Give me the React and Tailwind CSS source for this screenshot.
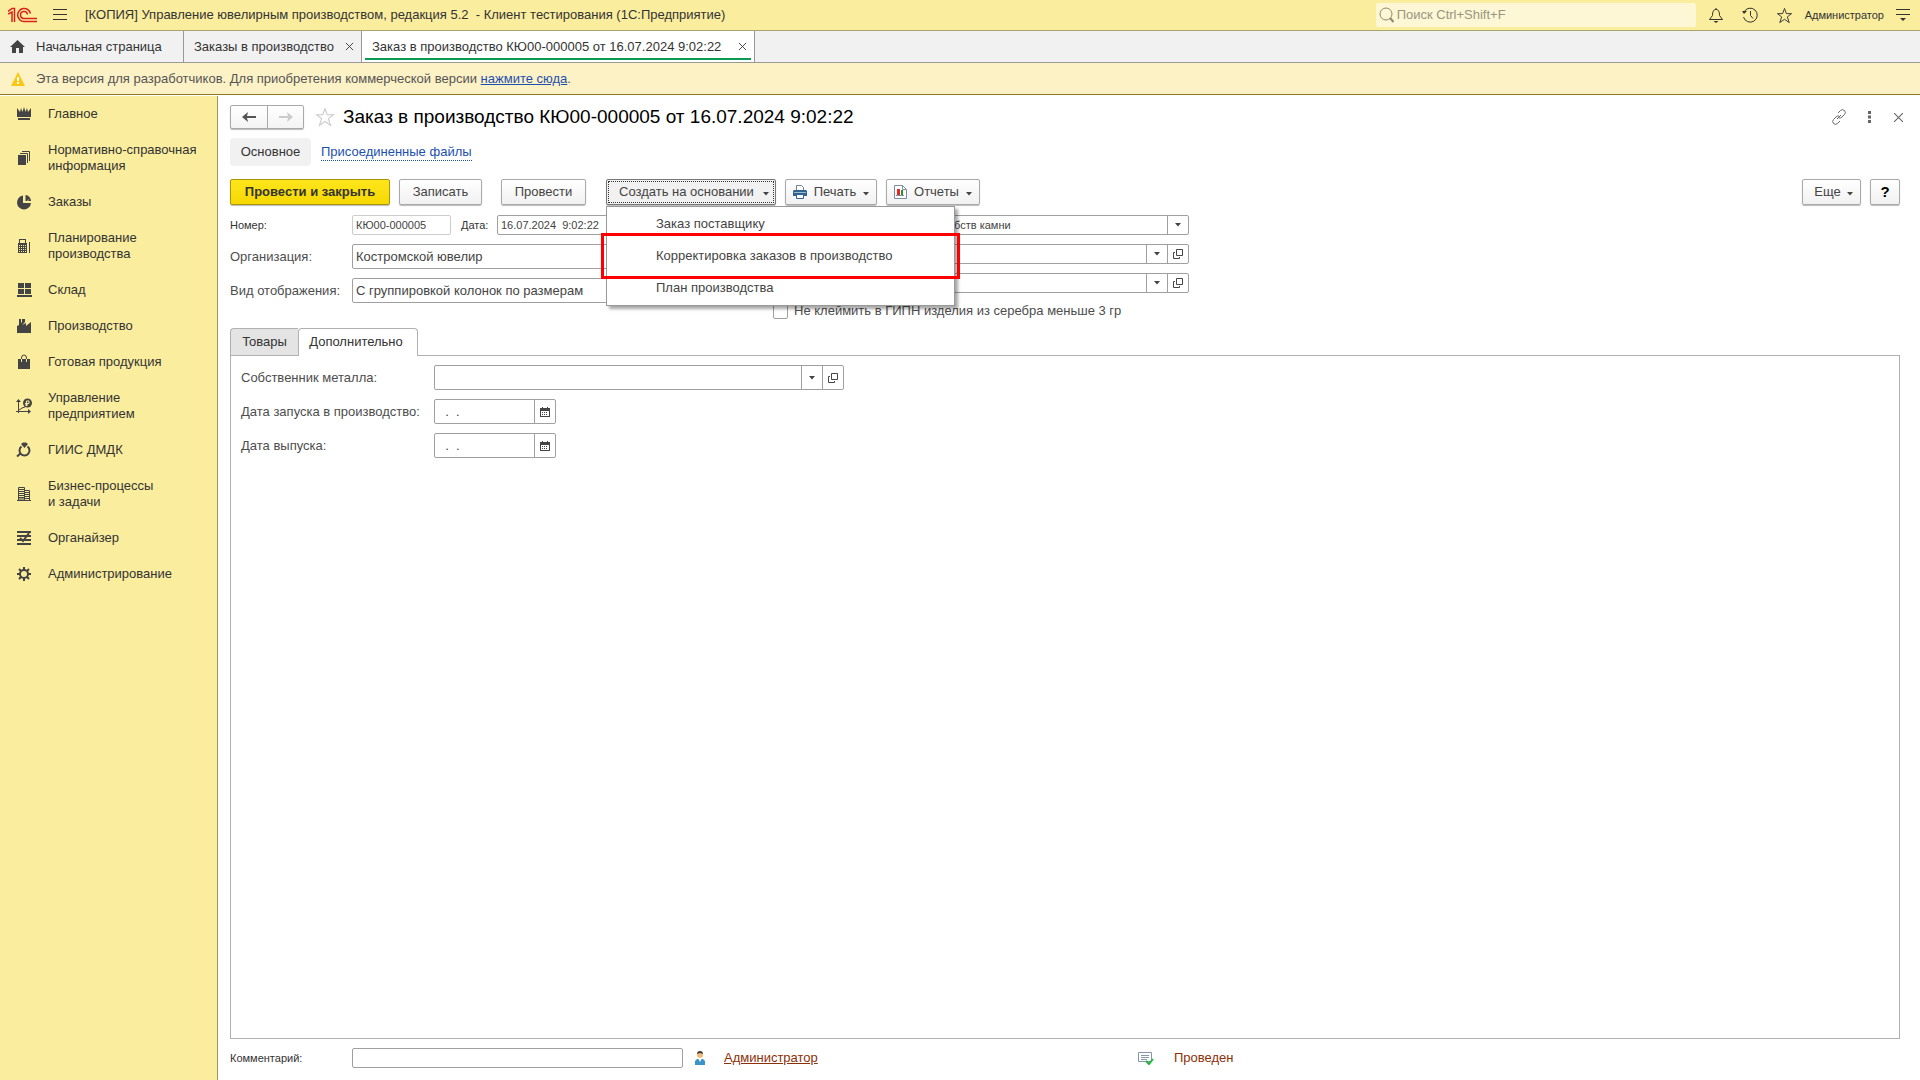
const SECTIONS = [
  { icon: "crown", lines: ["Главное"] },
  { icon: "books", lines: ["Нормативно-справочная", "информация"] },
  { icon: "pie", lines: ["Заказы"] },
  { icon: "calc", lines: ["Планирование", "производства"] },
  { icon: "store", lines: ["Склад"] },
  { icon: "factory", lines: ["Производство"] },
  { icon: "bag", lines: ["Готовая продукция"] },
  { icon: "chart", lines: ["Управление", "предприятием"] },
  { icon: "ring", lines: ["ГИИС ДМДК"] },
  { icon: "building", lines: ["Бизнес-процессы", "и задачи"] },
  { icon: "checklist", lines: ["Органайзер"] },
  { icon: "gear", lines: ["Администрирование"] },
];

const SECTION_ICONS = {
  crown: <path d="M1 2l3 4 1-4 1.500 4L8 1l1.500 5L11 2l1 4 3-4v9H1zM2 12h12v2H2z" />,
  books: (
    <>
      <path d="M2 5h8v10H2z" />
      <path d="M4 3.500h7.500V13M6 1.500h7.500V11" fill="none" stroke="currentColor" />
    </>
  ),
  pie: <path d="M7 1.500V9h8A7 7 0 1 1 7 1.500zM9.500 1A6 6 0 0 1 15 7h-3l1.500-2.500L11 7H9.500z" />,
  calc: (
    <>
      <path d="M3 1h7v4h1v10H2V5h1zM4 2v3h5V2z" fillRule="evenodd" />
      <path d="M13 4h1v11h-1z" />
      <path d="M3 7.500h7M3 9.500h7M3 11.500h7M3 13.500h7" stroke="#fbed9e" strokeDasharray="1 1" />
    </>
  ),
  store: <path d="M2 1h6v5H2zM9 1h6v5H9zM2 7h6v5H2zM9 7h6v5H9zM1 13h15v2H1z" />,
  factory: <path d="M1 15V8l2-1V1h2v4l1-1V1h3v3L6 7l4-2v3l5-4v11z" />,
  bag: (
    <>
      <path d="M2 5h12v10H2z" />
      <path d="M5.500 8V4a2.500 3 0 0 1 5 0v4" fill="none" stroke="currentColor" />
      <path d="M5.500 5v3M10.500 5v3" stroke="#fbed9e" />
    </>
  ),
  chart: (
    <>
      <path d="M0 4l2.500-3L5 4zM12 11l3 2.500-3 2.500z" />
      <path d="M2.500 3v12M0 13.500h13M3 12l3-2 3-1" fill="none" stroke="currentColor" />
      <circle cx="11.500" cy="5" r="4.500" />
      <path d="M10.500 8V3h2.500v2.500h-4M9 7h3" fill="none" stroke="#fbed9e" />
    </>
  ),
  ring: (
    <>
      <path d="M5 2l2-1.500h3L12 2l-3.500 4z" />
      <path d="M5.500 4.500A5 5 0 1 0 11.500 4.500M5 11l-4 3.500" fill="none" stroke="currentColor" strokeWidth="2" />
    </>
  ),
  building: (
    <>
      <path d="M2.500 14V1.500h6V14M8.500 4.500h5V14M1 14.500h14" fill="none" stroke="currentColor" />
      <path d="M3 3.500h5M3 5.500h5M3 7.500h5M3 9.500h5M3 11.500h5M3 13h5M9 6.500h4M9 8.500h4M9 10.500h4M9 12.500h4" stroke="currentColor" />
    </>
  ),
  checklist: (
    <path d="M1 2h14M1 6h14M1 10h14M1 14h14M4 8l3 3 6-8" fill="none" stroke="currentColor" strokeWidth="2" />
  ),
  gear: (
    <>
      <circle cx="8" cy="8" r="4" fill="none" stroke="currentColor" strokeWidth="2" />
      <path
        d="M8 1v3M8 12v3M1 8h3M12 8h3M3 3l2 2M11 11l2 2M13 3l-2 2M3 13l2-2"
        stroke="currentColor"
        strokeWidth="2"
      />
    </>
  ),
};

const MENU_ITEMS = ["Заказ поставщику", "Корректировка заказов в производство", "План производства"];

function Logo() {
  return (
    <svg width="30" height="16" viewBox="0 0 30 16" fill="none" stroke="#d9221c" className="shrink-0" aria-label="1С">
      <path d="M0 4.500L4 1.500h2.500V15M4 15V5L0 7" strokeWidth="1.500" />
      <path d="M22.500 6.500A6.500 6.500 0 1 0 16 14.500h13" strokeWidth="1.500" />
      <path d="M19.500 7.500A3.500 3.500 0 1 0 16 11.500h13" strokeWidth="1.500" />
    </svg>
  );
}

function Star({ size, className }) {
  return (
    <svg width={size} height={size} viewBox="0 0 18 18" fill="none" stroke="currentColor" className={className}>
      <path d="M9 1.500l2 5.500h5.500l-4.500 3.500 2 6-5-3.500-5 3.500 2-6L1.500 7H7z" />
    </svg>
  );
}

function Caret({ className = "" }) {
  return (
    <svg width="6" height="4" viewBox="0 0 6 4" fill="currentColor" className={`shrink-0 ${className}`}>
      <path d="M0 0h6L3 3.500z" />
    </svg>
  );
}

function CloseIcon({ size }) {
  return (
    <svg width={size} height={size} viewBox="0 0 10 10" fill="none" stroke="currentColor">
      <path d="M1 1l8 8M9 1L1 9" />
    </svg>
  );
}

function OpenIcon() {
  return (
    <svg width="10" height="10" viewBox="0 0 10 10" fill="none" stroke="currentColor">
      <path d="M3.500 0.500h6v6h-6zM2 3.500H0.500v6h6V8" />
    </svg>
  );
}

function CalendarIcon() {
  return (
    <svg width="10" height="10" viewBox="0 0 10 10">
      <path d="M0 1h2V0h1v1h4V0h1v1h2v9H0zM1 4v5h8V4z" fill="#444" fillRule="evenodd" />
      <path d="M2 5.500h6M2 7.500h6" stroke="#444" strokeDasharray="1 1" />
    </svg>
  );
}

function BackArrow() {
  return (
    <svg width="14" height="10" viewBox="0 0 14 10" fill="currentColor">
      <path d="M0 5l6-5-1 4h9v2H5l1 4z" />
    </svg>
  );
}

function PrintIcon() {
  return (
    <svg width="14" height="14" viewBox="0 0 14 14">
      <path d="M3.500 6V0.500h5l2 2V6" fill="#fff" stroke="#6f8192" />
      <path d="M1 5h12l1 1v5H0V6z" fill="#2f628f" />
      <path d="M1 7.500h12" stroke="#9dbad3" />
      <path d="M3.500 9.500h7v4h-7z" fill="#fff" stroke="#2f628f" />
    </svg>
  );
}

function ReportIcon() {
  return (
    <svg width="13" height="14" viewBox="0 0 13 14">
      <path d="M0.500 0.500h8l4 4v9h-12z" fill="#fff" stroke="#7c8da0" />
      <path d="M8.500 0.500v4h4" fill="none" stroke="#7c8da0" />
      <path d="M3 4h3v6H3z" fill="#e22" />
      <path d="M7 5h2v5H7z" fill="#1a9a2a" />
      <path d="M2 10.500h8" stroke="#7c8da0" />
    </svg>
  );
}

const BUTTON_LOOK = {
  plain: "border-[#a9a9a9] bg-linear-to-b from-white to-[#f1f1f1] text-[#444]",
  primary: "border-[#a8950c] bg-linear-to-b from-[#ffe51a] to-[#f5d800] font-bold text-[#333]",
  pressed: "border-[#777] bg-[#f1f1f1] p-px text-[#444]",
  help: "border-[#a9a9a9] bg-linear-to-b from-white to-[#f1f1f1] text-[15px] font-bold text-black",
};

function Button({ look = "plain", className = "", children, ...rest }) {
  return (
    <button
      type="button"
      className={`flex h-[26px] items-center justify-center rounded-xs border whitespace-nowrap shadow-[0_1px_1px_#bbb] ${BUTTON_LOOK[look]} ${className}`}
      {...rest}
    >
      {children}
    </button>
  );
}

// Text box with small buttons joined to its right edge.
function Field({ id, value = "", buttons = [], small, pale, className = "", label }) {
  return (
    <div
      className={`flex overflow-hidden rounded-xs border bg-white ${pale ? "border-[#ccc]" : "border-[#a0a0a0]"} ${small ? "h-5 text-[11px]" : "h-[25px]"} ${className}`}
    >
      <input id={id} defaultValue={value} aria-label={label} className="min-w-0 flex-1 px-[3px] text-[#444] outline-none" />
      {buttons.map((kind) => (
        <button
          key={kind}
          type="button"
          aria-label={kind}
          className="flex w-[21px] shrink-0 items-center justify-center border-l border-[#a0a0a0] text-[#444]"
        >
          {kind === "list" && <Caret />}
          {kind === "open" && <OpenIcon />}
          {kind === "calendar" && <CalendarIcon />}
        </button>
      ))}
    </div>
  );
}

function TopBar() {
  return (
    <header className="flex h-[31px] shrink-0 items-center border-b border-[#a9a36c] bg-[#fbed9e] pl-2 text-[#333]">
      <Logo />
      <button type="button" aria-label="Меню" className="ml-[15px]">
        <svg width="14" height="12" viewBox="0 0 14 12" stroke="currentColor">
          <path d="M0 0.500h14M0 5.500h14M0 10.500h14" />
        </svg>
      </button>
      <h1 className="ml-[18px] whitespace-pre">
        {"[КОПИЯ] Управление ювелирным производством, редакция 5.2  - Клиент тестирования (1С:Предприятие)"}
      </h1>
      <div className="ml-auto flex h-6 w-80 items-center rounded-xs bg-[#fdf7d6] pl-[3px]">
        <svg width="16" height="16" viewBox="0 0 16 16" fill="none" stroke="#8f8a70" className="shrink-0">
          <circle cx="7" cy="7" r="6" />
          <path d="M11 11l3.500 4" strokeWidth="2" />
        </svg>
        <input
          aria-label="Поиск"
          placeholder="Поиск Ctrl+Shift+F"
          className="min-w-0 flex-1 pl-[2px] outline-none placeholder:text-[#9a957d]"
        />
      </div>
      <button type="button" aria-label="Уведомления" className="ml-3">
        <svg width="16" height="16" viewBox="0 0 16 16" fill="none" stroke="currentColor">
          <path d="M1.500 12.500h13l-3-4c0-4-1-6-3.500-6s-3.500 2-3.500 6zM8 2.500V1" />
          <path d="M5.500 14h5L8 16z" fill="currentColor" stroke="none" />
        </svg>
      </button>
      <button type="button" aria-label="История" className="ml-[18px]">
        <svg width="16" height="16" viewBox="0 0 16 16" fill="none" stroke="currentColor">
          <path d="M2 5a7 7 0 1 1-0.500 5M8.500 4v4.500l2.500 3" />
          <path d="M0 4h5L2 7z" fill="currentColor" stroke="none" />
        </svg>
      </button>
      <button type="button" aria-label="Избранное" className="ml-[18px]">
        <Star size={17} />
      </button>
      <button type="button" className="ml-3 text-[11px]">
        Администратор
      </button>
      <button type="button" aria-label="Настройки" className="mr-[10px] ml-3">
        <svg width="14" height="12" viewBox="0 0 14 12" stroke="currentColor">
          <path d="M0 0.500h14M0 5.500h14" />
          <path d="M4 9h6l-3 3z" fill="currentColor" stroke="none" />
        </svg>
      </button>
    </header>
  );
}

function WindowTabs() {
  return (
    <nav className="flex h-8 shrink-0 border-b border-[#999] bg-[#f1f1f1] text-[#333]">
      <button type="button" className="flex w-[184px] items-center border-r border-[#999] pl-[10px]">
        <svg width="15" height="13" viewBox="0 0 15 13" fill="#444">
          <path d="M7.500 0L15 7h-2v6H9V8H6v5H2V7H0z" />
        </svg>
        <span className="ml-[11px]">Начальная страница</span>
      </button>
      <div className="flex w-[178px] items-center justify-between border-r border-[#999] pr-[7px] pl-[10px]">
        <button type="button">Заказы в производство</button>
        <button type="button" aria-label="Закрыть">
          <CloseIcon size={9} />
        </button>
      </div>
      <div className="flex w-[393px] border-r border-[#999] bg-white px-[3px] pb-[2px]">
        <div className="flex flex-1 items-center justify-between border-b-2 border-[#0a9a55] pt-1 pr-1 pl-[7px]">
          <button type="button">Заказ в производство КЮ00-000005 от 16.07.2024 9:02:22</button>
          <button type="button" aria-label="Закрыть">
            <CloseIcon size={9} />
          </button>
        </div>
      </div>
    </nav>
  );
}

function Notice() {
  return (
    <div className="flex h-8 shrink-0 items-center border-b border-[#94781c] bg-[#fdf1c6] pl-[11px] text-[#555]">
      <svg width="14" height="14" viewBox="0 0 14 14">
        <path d="M7 0l7 14H0z" fill="#fbc712" />
        <path d="M6 5h2v4H6zM6 10h2v2H6z" fill="#fff" />
      </svg>
      <p className="ml-[11px]">
        Эта версия для разработчиков. Для приобретения коммерческой версии{" "}
        <a href="#buy" className="text-[#1d50ae] underline">
          нажмите сюда
        </a>
        .
      </p>
    </div>
  );
}

function Sidebar() {
  return (
    <nav className="mt-px w-[218px] shrink-0 border-r border-[#9c955c] bg-[#fbed9e] text-[#333]">
      {SECTIONS.map((section) => (
        <a key={section.icon} href={`#${section.icon}`} className="flex items-center py-[10px] pl-4 leading-4">
          <svg width="16" height="16" viewBox="0 0 16 16" fill="currentColor" className="shrink-0 text-[#444]">
            {SECTION_ICONS[section.icon]}
          </svg>
          <span className="ml-4">
            {section.lines.map((line) => (
              <span key={line} className="block whitespace-nowrap">
                {line}
              </span>
            ))}
          </span>
        </a>
      ))}
    </nav>
  );
}

function TitleRow() {
  return (
    <div className="flex h-6 items-center">
      <div className="flex h-6 rounded-xs border border-[#a9a9a9] bg-linear-to-b from-white to-[#f4f4f4] shadow-[0_1px_1px_#bbb]">
        <button type="button" aria-label="Назад" className="flex w-9 items-center justify-center text-[#555]">
          <BackArrow />
        </button>
        <button
          type="button"
          aria-label="Вперед"
          className="flex w-9 items-center justify-center border-l border-[#a9a9a9] text-[#ccc]"
        >
          <span className="rotate-180">
            <BackArrow />
          </span>
        </button>
      </div>
      <button type="button" aria-label="В избранное" className="ml-[11px] text-[#ccc]">
        <Star size={20} />
      </button>
      <h2 className="ml-2 text-[19px] whitespace-nowrap text-black">
        Заказ в производство КЮ00-000005 от 16.07.2024 9:02:22
      </h2>
      <div className="ml-auto flex items-center text-[#666]">
        <button type="button" aria-label="Ссылка">
          <svg width="16" height="16" viewBox="0 0 16 16" fill="none" stroke="currentColor">
            <path d="M7 4l2.500-2.500a3 3 0 0 1 4 0 3 3 0 0 1 0 4L11 8a3 3 0 0 1-3 1M9 12l-2.500 2.500a3 3 0 0 1-4 0 3 3 0 0 1 0-4L5 8a3 3 0 0 1 3-1M6 10l4-4" />
          </svg>
        </button>
        <button type="button" aria-label="Еще действия" className="ml-[21px]">
          <svg width="3" height="12" viewBox="0 0 3 12" fill="currentColor">
            <path d="M0 0h3v3H0zM0 4.500h3v3H0zM0 9h3v3H0z" />
          </svg>
        </button>
        <button type="button" aria-label="Закрыть форму" className="-mr-1 ml-[22px]">
          <CloseIcon size={11} />
        </button>
      </div>
    </div>
  );
}

function CreateMenu() {
  return (
    <div className="relative ml-5">
      <Button look="pressed" className="w-[170px]" aria-expanded="true">
        <span className="flex h-full flex-1 items-center justify-between border border-dotted border-[#333] pr-1 pl-[10px]">
          Создать на основании
          <Caret className="mt-1" />
        </span>
      </Button>
      <div
        role="menu"
        className="absolute top-[27px] left-0 z-10 flex w-[349px] flex-col border border-[#999] bg-white py-px shadow-[3px_3px_3px_rgba(0,0,0,0.35)]"
      >
        {MENU_ITEMS.map((item) => (
          <button key={item} type="button" role="menuitem" className="h-8 pl-[49px] text-left text-[#444]">
            {item}
          </button>
        ))}
        <div className="pointer-events-none absolute top-[26px] -left-[6px] h-[46px] w-[359px] border-3 border-[#fe0000]" />
      </div>
    </div>
  );
}

function Toolbar() {
  return (
    <div className="mt-[13px] flex items-center">
      <Button look="primary" className="w-40">
        Провести и закрыть
      </Button>
      <Button className="ml-[9px] w-[83px]">Записать</Button>
      <Button className="ml-[19px] w-[85px]">Провести</Button>
      <CreateMenu />
      <Button className="ml-[9px] w-[92px]">
        <PrintIcon />
        <span className="ml-[7px]">Печать</span>
        <Caret className="mt-1 ml-[7px]" />
      </Button>
      <Button className="ml-[9px] w-[94px]">
        <ReportIcon />
        <span className="ml-[7px]">Отчеты</span>
        <Caret className="mt-1 ml-[7px]" />
      </Button>
      <Button className="ml-auto w-[59px] pl-1">
        Еще
        <Caret className="mt-1 ml-[6px]" />
      </Button>
      <Button look="help" className="ml-[9px] w-[30px]">
        ?
      </Button>
    </div>
  );
}

function OrderFields() {
  return (
    <div className="mt-[10px] flex items-start">
      <div className="flex w-[543px] flex-col gap-[9px]">
        <div className="flex items-center">
          <label htmlFor="number" className="w-[122px] shrink-0 text-[11px] text-[#333]">
            Номер:
          </label>
          <Field id="number" value="КЮ00-000005" small pale className="w-[99px]" />
          <label htmlFor="date" className="ml-[10px] w-9 shrink-0 text-[11px] text-[#333]">
            Дата:
          </label>
          <Field id="date" value="16.07.2024  9:02:22" small buttons={["calendar"]} className="w-[140px]" />
        </div>
        <div className="flex items-center">
          <label htmlFor="org" className="w-[122px] shrink-0">
            Организация:
          </label>
          <Field id="org" value="Костромской ювелир" buttons={["list", "open"]} className="w-[400px]" />
        </div>
        <div className="flex items-center">
          <label htmlFor="view" className="w-[122px] shrink-0">
            Вид отображения:
          </label>
          <Field id="view" value="С группировкой колонок по размерам" buttons={["list"]} className="w-[400px]" />
        </div>
      </div>
      <div className="flex w-[416px] flex-col items-end gap-[9px]">
        <Field label="Камни" value="Собств камни" small buttons={["list"]} className="w-[253px]" />
        <Field label="Склад" small buttons={["list", "open"]} className="w-[253px]" />
        <Field label="Подразделение" small buttons={["list", "open"]} className="w-[253px]" />
        <label className="flex h-[18px] items-center self-start whitespace-nowrap">
          <input
            type="checkbox"
            className="mr-[6px] size-[15px] appearance-none rounded-xs border border-[#a0a0a0] bg-white"
          />
          Не клеймить в ГИПН изделия из серебра меньше 3 гр
        </label>
      </div>
    </div>
  );
}

function DetailsPanel() {
  return (
    <>
      <div role="tablist" className="mt-2 flex h-[27px] text-[#333]">
        <button type="button" role="tab" className="w-[68px] rounded-tl-sm border-t border-l border-[#b0b0b0] bg-[#e4e4e4]">
          Товары
        </button>
        <button
          type="button"
          role="tab"
          aria-selected="true"
          className="z-1 -mb-px w-[120px] rounded-t-sm border border-b-0 border-[#b0b0b0] bg-white pr-1 pb-px"
        >
          Дополнительно
        </button>
      </div>
      <div className="flex flex-1 flex-col gap-[9px] border border-[#b0b0b0] px-[10px] pt-[9px]">
        <div className="flex items-center">
          <label htmlFor="owner" className="w-[193px]">
            Собственник металла:
          </label>
          <Field id="owner" buttons={["list", "open"]} className="w-[410px]" />
        </div>
        <div className="flex items-center">
          <label htmlFor="start" className="w-[193px]">
            Дата запуска в производство:
          </label>
          <Field id="start" value="  .  ." buttons={["calendar"]} className="w-[122px]" />
        </div>
        <div className="flex items-center">
          <label htmlFor="release" className="w-[193px]">
            Дата выпуска:
          </label>
          <Field id="release" value="  .  ." buttons={["calendar"]} className="w-[122px]" />
        </div>
      </div>
    </>
  );
}

function FooterRow() {
  return (
    <div className="mt-[9px] mb-3 flex h-5 items-center">
      <label htmlFor="comment" className="w-[122px] text-[11px] text-[#333]">
        Комментарий:
      </label>
      <Field id="comment" small className="w-[331px]" />
      <svg width="10" height="14" viewBox="0 0 10 14" className="ml-3">
        <path d="M0 14v-4l2-2h6l2 2v4z" fill="#3b93c8" />
        <path d="M3.500 8h3L5 11z" fill="#fff" />
        <circle cx="5" cy="4" r="3" fill="#eebb7c" />
        <path d="M2 3a3 3 0 0 1 6 0L5 2z" fill="#4a3a2a" />
      </svg>
      <a href="#author" className="ml-[19px] w-[97px] text-[#8c3008] underline">
        Администратор
      </a>
      <svg width="16" height="13" viewBox="0 0 16 13" className="ml-[317px]">
        <path d="M0.500 0.500h13v9h-13z" fill="#fff" stroke="#8797a8" />
        <path d="M3 3.500h8M3 5.500h8M3 7.500h6" stroke="#8797a8" />
        <path d="M8 9l3 3 4-5" fill="none" stroke="#22b33a" strokeWidth="2" />
      </svg>
      <span className="ml-5 text-[#8c3008]">Проведен</span>
    </div>
  );
}

export default function App() {
  return (
    <div className="flex min-h-screen flex-col bg-white font-['Liberation_Sans',Arial,sans-serif] text-[13px] leading-4 text-[#4d4d4d]">
      <TopBar />
      <WindowTabs />
      <Notice />
      <div className="flex flex-1">
        <Sidebar />
        <main className="flex min-w-0 flex-1 flex-col pt-[10px] pr-5 pl-3">
          <TitleRow />
          <div className="mt-[9px] flex h-7 items-center">
            <button type="button" className="h-7 w-[81px] rounded-sm bg-[#f1f1f1] text-[#333]">
              Основное
            </button>
            <a href="#files" className="ml-[10px] border-b border-dotted border-[#1d50ae] leading-4 text-[#1d50ae]">
              Присоединенные файлы
            </a>
          </div>
          <Toolbar />
          <OrderFields />
          <DetailsPanel />
          <FooterRow />
        </main>
      </div>
    </div>
  );
}
